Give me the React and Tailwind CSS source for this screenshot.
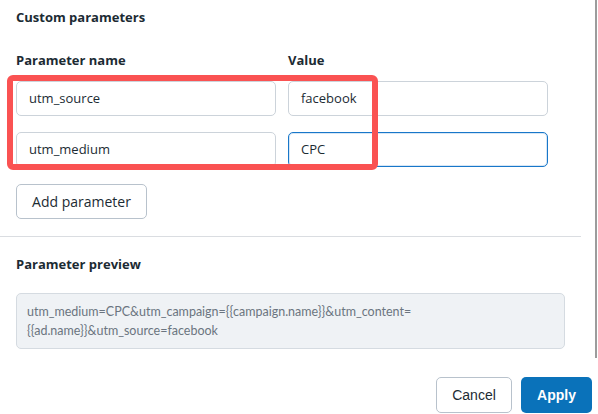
import React from "react";

const font = { fontFamily: '"Open Sans", "Noto Sans", Arial, sans-serif' };

function Field({ value, focused }) {
  return (
    <div
      className={`flex h-[35px] w-[260px] items-center rounded-[5px] border bg-white px-[12px] text-[13px] text-[#1c2b33] ${
        focused ? "border-[#1877c9] shadow-[inset_0_0_0_1px_#d6e6f5]" : "border-[#ccd3da]"
      }`}
    >
      {value}
    </div>
  );
}

export default function App() {
  const rows = [
    { name: "utm_source", value: "facebook" },
    { name: "utm_medium", value: "CPC", focused: true },
  ];

  return (
    <div className="relative h-[414px] w-[598px] overflow-hidden bg-white" style={font}>
      {/* scrollbar edge */}
      <div className="absolute right-[1px] top-0 h-[358px] w-[2px] bg-[#9c9c9c]" />

      <div className="w-[581px]">
        <div className="px-4 pt-[8px]">
          <h2 className="text-[13px] font-bold leading-[18px] text-[#1c2b33]">Custom parameters</h2>

          <div className="mt-[25px] flex gap-3 text-[13px] font-bold leading-[18px] text-[#1c2b33]">
            <div className="w-[260px]">Parameter name</div>
            <div>Value</div>
          </div>

          <div className="relative mt-[12px] flex flex-col gap-4">
            {rows.map((r) => (
              <div key={r.name} className="flex gap-3">
                <Field value={r.name} />
                <Field value={r.value} focused={r.focused} />
              </div>
            ))}
            {/* annotation box */}
            <div className="pointer-events-none absolute left-[-9px] top-[-6px] h-[95px] w-[371px] rounded-[6px] border-[6px] border-[#fa5252]" />
          </div>

          <button className="mt-[17px] h-[35px] w-[131px] rounded-[5px] border border-[#b8c2cc] bg-white text-[14px] text-[#1c2b33]">
            Add parameter
          </button>
        </div>

        <div className="mt-[17px] h-px bg-[#dadde1]" />

        <div className="px-4">
          <h2 className="mt-[18px] text-[13px] font-bold leading-[18px] text-[#1c2b33]">Parameter preview</h2>
          <div
            className="mt-[20px] h-[56px] w-[549px] rounded-[5px] border border-[#d5dbe1] bg-[#eff2f5] px-[10px] pt-[8px] text-[12.5px] leading-[19px] text-[#6b7580]"
            style={{ fontFamily: 'Lato, "Open Sans", sans-serif' }}
          >
            utm_medium=CPC&amp;utm_campaign={"{{campaign.name}}"}&amp;utm_content=
            <br />
            {"{{ad.name}}"}&amp;utm_source=facebook
          </div>
        </div>
      </div>

      <div className="mt-[28px] flex justify-end gap-[9px] pr-[6px]" style={{ fontFamily: '"Liberation Sans", Arial, sans-serif' }}>
        <button className="h-[36px] w-[76px] rounded-[5px] border border-[#b8c2cc] bg-white text-[14px] text-[#1c2b33]">
          Cancel
        </button>
        <button className="h-[36px] w-[71px] rounded-[5px] bg-[#0a72ba] text-[14px] font-bold text-white">
          Apply
        </button>
      </div>
    </div>
  );
}
